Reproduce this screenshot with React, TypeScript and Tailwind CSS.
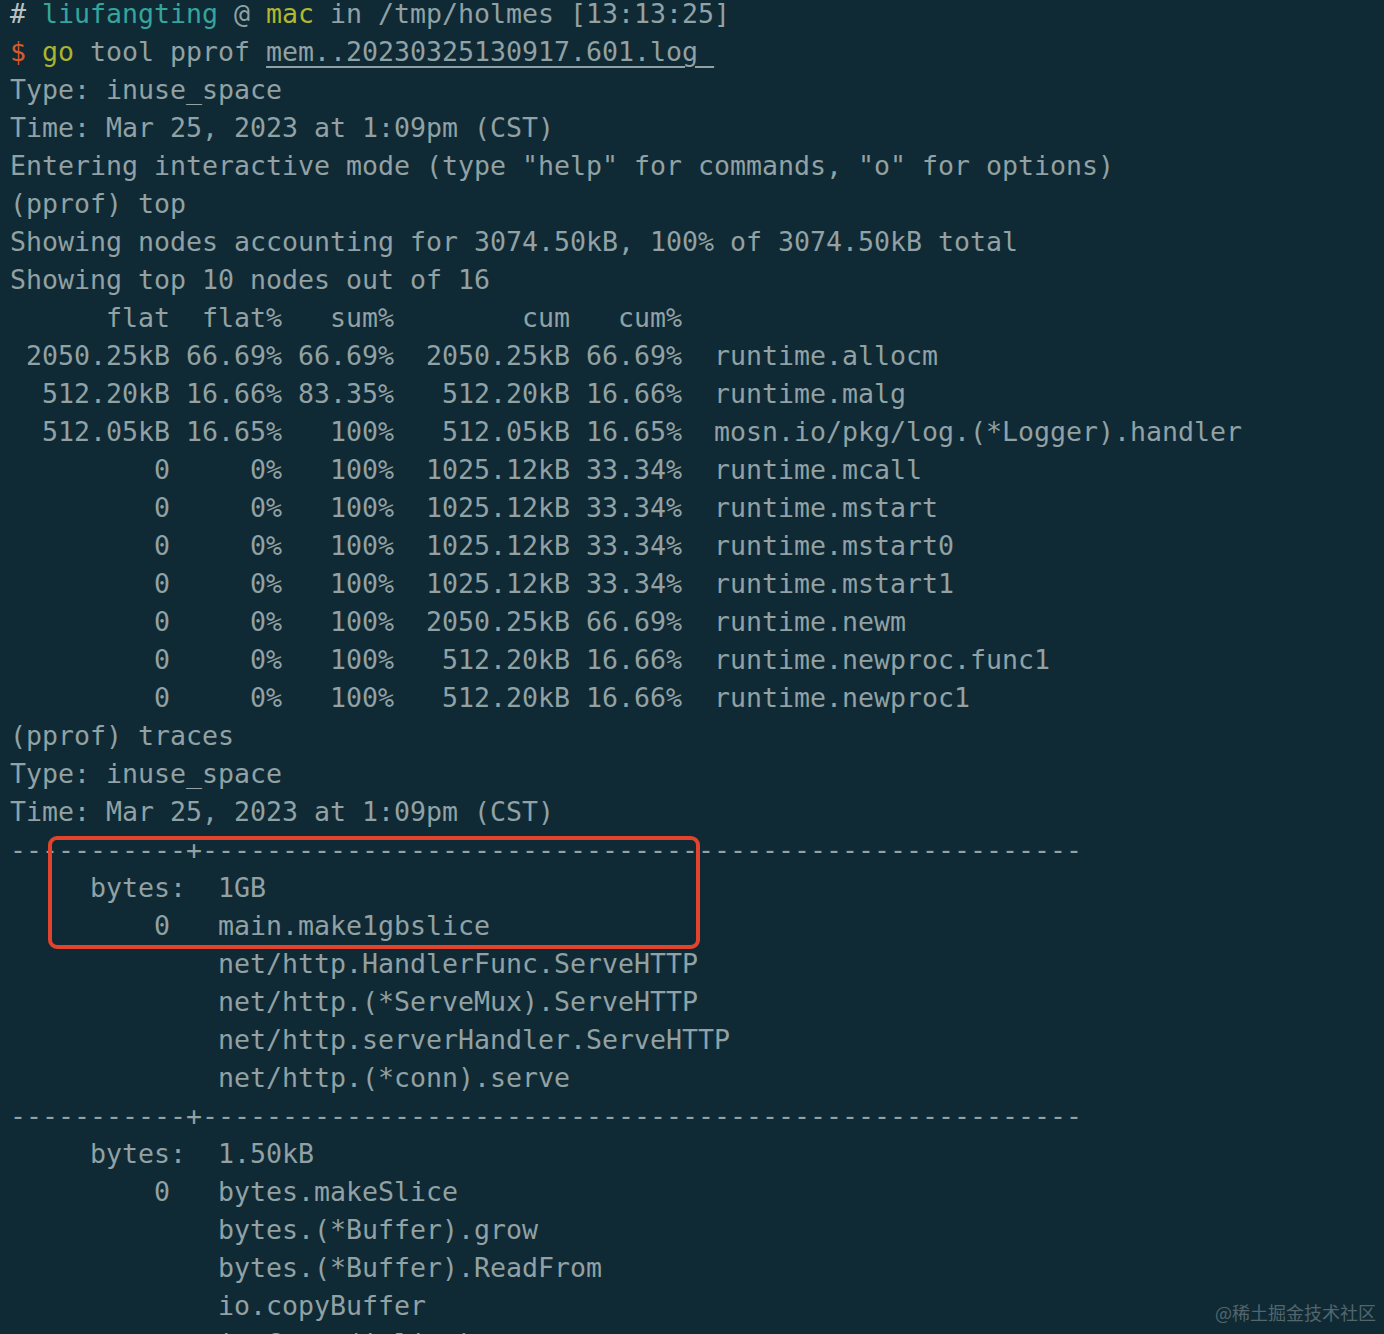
import React from 'react';

const FG = 'text-[#91a1a4]';

type Seg = { t: string; c?: string; u?: boolean };

const L = (t: string): Seg[] => [{ t }];

const lines: Seg[][] = [
  [
    { t: '# ', c: 'text-[#b8c2c2]' },
    { t: 'liufangting', c: 'text-[#35a59b]' },
    { t: ' @ ' },
    { t: 'mac', c: 'text-[#b2b82e]' },
    { t: ' in /tmp/holmes [13:13:25]' },
  ],
  [
    { t: '$', c: 'text-[#d65a2a]' },
    { t: ' ' },
    { t: 'go', c: 'text-[#a9b52c]' },
    { t: ' tool pprof ' },
    { t: 'mem..20230325130917.601.log ', u: true },
  ],
  L('Type: inuse_space'),
  L('Time: Mar 25, 2023 at 1:09pm (CST)'),
  L('Entering interactive mode (type "help" for commands, "o" for options)'),
  L('(pprof) top'),
  L('Showing nodes accounting for 3074.50kB, 100% of 3074.50kB total'),
  L('Showing top 10 nodes out of 16'),
  L('      flat  flat%   sum%        cum   cum%'),
  L(' 2050.25kB 66.69% 66.69%  2050.25kB 66.69%  runtime.allocm'),
  L('  512.20kB 16.66% 83.35%   512.20kB 16.66%  runtime.malg'),
  L('  512.05kB 16.65%   100%   512.05kB 16.65%  mosn.io/pkg/log.(*Logger).handler'),
  L('         0     0%   100%  1025.12kB 33.34%  runtime.mcall'),
  L('         0     0%   100%  1025.12kB 33.34%  runtime.mstart'),
  L('         0     0%   100%  1025.12kB 33.34%  runtime.mstart0'),
  L('         0     0%   100%  1025.12kB 33.34%  runtime.mstart1'),
  L('         0     0%   100%  2050.25kB 66.69%  runtime.newm'),
  L('         0     0%   100%   512.20kB 16.66%  runtime.newproc.func1'),
  L('         0     0%   100%   512.20kB 16.66%  runtime.newproc1'),
  L('(pprof) traces'),
  L('Type: inuse_space'),
  L('Time: Mar 25, 2023 at 1:09pm (CST)'),
  L('-----------+-------------------------------------------------------'),
  L('     bytes:  1GB'),
  L('         0   main.make1gbslice'),
  L('             net/http.HandlerFunc.ServeHTTP'),
  L('             net/http.(*ServeMux).ServeHTTP'),
  L('             net/http.serverHandler.ServeHTTP'),
  L('             net/http.(*conn).serve'),
  L('-----------+-------------------------------------------------------'),
  L('     bytes:  1.50kB'),
  L('         0   bytes.makeSlice'),
  L('             bytes.(*Buffer).grow'),
  L('             bytes.(*Buffer).ReadFrom'),
  L('             io.copyBuffer'),
  L('             io.Copy (inline)'),
];

export default function App() {
  return (
    <div className="relative h-[1334px] w-[1384px] overflow-hidden bg-[#0f2a35]">
      <pre
        className={`-mt-[5px] pl-[10px] font-['DejaVu_Sans_Mono',monospace] text-[26.58px] leading-[38px] ${FG}`}
      >
        {lines.map((segs, i) => (
          <div key={i} className="h-[38px] whitespace-pre">
            {segs.map((s, j) => (
              <span
                key={j}
                className={`${s.c ?? ''} ${s.u ? 'underline decoration-2 underline-offset-[5px]' : ''}`}
              >
                {s.t}
              </span>
            ))}
          </div>
        ))}
      </pre>

      {/* highlight box */}
      <div className="absolute left-[48px] top-[836px] h-[113px] w-[652px] rounded-[9px] border-[4px] border-[#e2432d]" />

      <div className="absolute bottom-[8px] right-[8px] font-['Noto_Sans_CJK_SC',sans-serif] text-[18px] text-[#52666c]">
        @稀土掘金技术社区
      </div>
    </div>
  );
}
